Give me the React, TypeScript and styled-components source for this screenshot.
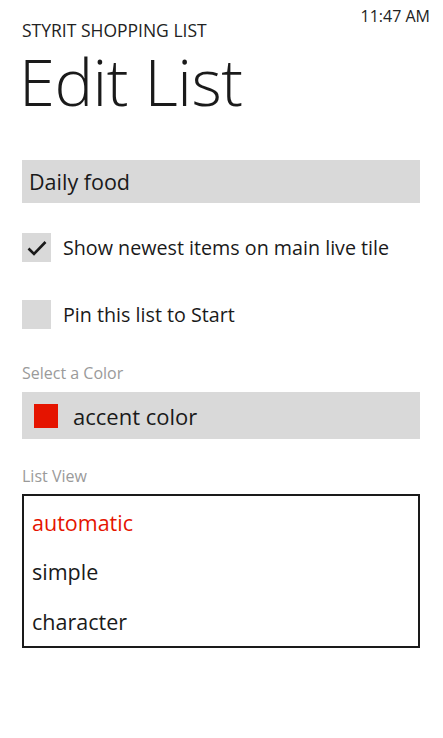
import * as React from "react";
import styled, { createGlobalStyle } from "styled-components";

const GlobalStyle = createGlobalStyle`
  html, body {
    margin: 0;
    padding: 0;
    background: #ffffff;
  }
  body {
    font-family: "Open Sans", "Noto Sans", sans-serif;
    color: #1f1f1f;
  }
`;

const Page = styled.div`
  width: 443px;
  height: 738px;
  box-sizing: border-box;
  padding: 0 23px 0 22px;
  display: flex;
  flex-direction: column;
  overflow: hidden;
`;

const Header = styled.div`
  height: 40px;
  display: flex;
  justify-content: space-between;
  margin-right: -10px;
`;

const AppTitle = styled.div`
  align-self: flex-end;
  font-size: 17.5px;
  line-height: 20px;
  color: #222;
`;

const Clock = styled.div`
  padding-top: 7px;
  font-size: 16px;
  line-height: 18px;
  color: #222;
`;

const PageTitle = styled.h1`
  margin: 8px 0 0 -3px;
  font-size: 65px;
  font-weight: 300;
  line-height: 66px;
  letter-spacing: -0.5px;
  color: #1a1a1a;
`;

const TextBox = styled.div`
  margin-top: 46px;
  height: 43px;
  background: #d9d9d9;
  display: flex;
  align-items: center;
  padding-left: 7px;
  font-size: 21.5px;
  color: #1a1a1a;
`;

const CheckRow = styled.label<{ $top: number }>`
  margin-top: ${(p) => p.$top}px;
  height: 29px;
  display: flex;
  align-items: center;
  gap: 12px;
  font-size: 19.7px;
  color: #1a1a1a;
`;

const Box = styled.span`
  width: 29px;
  height: 29px;
  background: #d9d9d9;
  display: flex;
  align-items: center;
  justify-content: center;
  flex-shrink: 0;
`;

const FieldLabel = styled.div<{ $top: number }>`
  margin-top: ${(p) => p.$top}px;
  font-size: 16px;
  line-height: 20px;
  color: #9a9a9a;
`;

const Picker = styled.div`
  margin-top: 9px;
  height: 47px;
  background: #d9d9d9;
  display: flex;
  align-items: center;
  padding-left: 12px;
  gap: 15px;
  font-size: 22px;
  color: #1a1a1a;
`;

const Swatch = styled.span`
  width: 24px;
  height: 24px;
  background: #e51400;
`;

const ListBox = styled.div`
  margin-top: 8px;
  height: 154px;
  box-sizing: border-box;
  border: 2px solid #1a1a1a;
  display: flex;
  flex-direction: column;
  padding: 2px 0 0 8px;
`;

const ListItem = styled.div<{ $selected?: boolean }>`
  height: 50px;
  display: flex;
  align-items: center;
  font-size: 21.5px;
  color: ${(p) => (p.$selected ? "#e51400" : "#1a1a1a")};
`;

const Check = () => (
  <svg width="22" height="18" viewBox="0 0 22 18">
    <path d="M2.5 9.5 L8 15 L19.5 3" fill="none" stroke="#1a1a1a" strokeWidth="2.6" />
  </svg>
);

export default function App() {
  return (
    <>
      <GlobalStyle />
      <Page>
        <Header>
          <AppTitle>STYRIT SHOPPING LIST</AppTitle>
          <Clock>11:47 AM</Clock>
        </Header>
        <PageTitle>Edit List</PageTitle>
        <TextBox>Daily food</TextBox>
        <CheckRow $top={30}>
          <Box>
            <Check />
          </Box>
          Show newest items on main live tile
        </CheckRow>
        <CheckRow $top={38}>
          <Box />
          Pin this list to Start
        </CheckRow>
        <FieldLabel $top={34}>Select a Color</FieldLabel>
        <Picker>
          <Swatch />
          accent color
        </Picker>
        <FieldLabel $top={27}>List View</FieldLabel>
        <ListBox>
          <ListItem $selected>automatic</ListItem>
          <ListItem>simple</ListItem>
          <ListItem>character</ListItem>
        </ListBox>
      </Page>
    </>
  );
}
